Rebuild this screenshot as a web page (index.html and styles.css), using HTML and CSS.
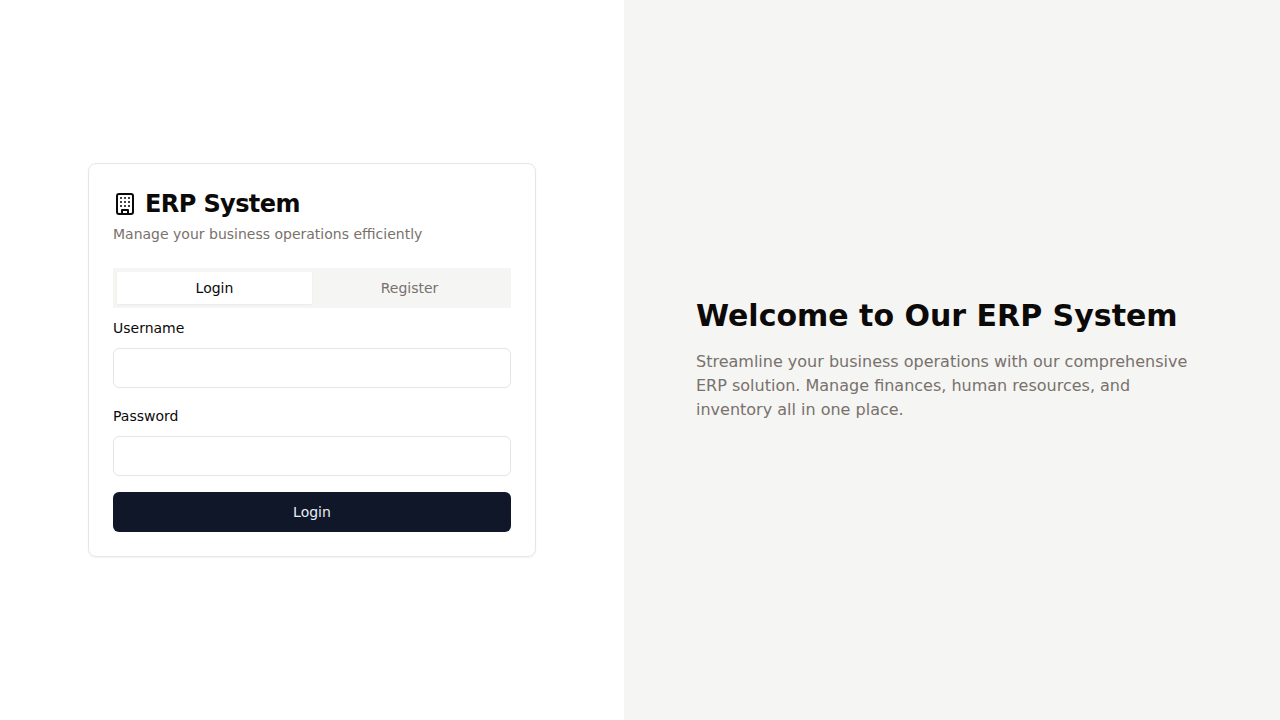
FILE: index.html
```html
<!DOCTYPE html>
<html lang="en">
<head>
<meta charset="utf-8">
<meta name="viewport" content="width=device-width, initial-scale=1">
<title>ERP System</title>
<link rel="stylesheet" href="styles.css">
</head>
<body>
<div class="page">
  <main class="auth">
    <section class="card">
      <header class="card-header">
        <h1 class="card-title">
          <svg class="icon" viewBox="0 0 24 24" aria-hidden="true">
            <rect x="4" y="2" width="16" height="20" rx="2"/>
            <path d="M9 22v-4h6v4M8 6h.01M16 6h.01M12 6h.01M12 10h.01M12 14h.01M16 10h.01M16 14h.01M8 10h.01M8 14h.01"/>
          </svg>
          ERP System
        </h1>
        <p class="card-description">Manage your business operations efficiently</p>
      </header>
      <div class="tabs" role="tablist">
        <button class="tab tab-active" type="button" role="tab" aria-selected="true">Login</button>
        <button class="tab" type="button" role="tab" aria-selected="false">Register</button>
      </div>
      <form class="form">
        <div class="field">
          <label class="label" for="username">Username</label>
          <input class="input" id="username" name="username" type="text">
        </div>
        <div class="field">
          <label class="label" for="password">Password</label>
          <input class="input" id="password" name="password" type="password">
        </div>
        <button class="submit" type="submit">Login</button>
      </form>
    </section>
  </main>
  <aside class="hero">
    <div class="hero-content">
      <h2 class="hero-title">Welcome to Our ERP System</h2>
      <p class="hero-text">Streamline your business operations with our comprehensive ERP solution. Manage finances, human resources, and inventory all in one place.</p>
    </div>
  </aside>
</div>
</body>
</html>
```
FILE: styles.css
```css
* {
  box-sizing: border-box;
  margin: 0;
}

body {
  background: #fff;
  color: #0c0a09;
  font-family: "DejaVu Sans", sans-serif;
  font-size: 16px;
  line-height: 24px;
}

button,
input {
  font: inherit;
}

.page {
  display: flex;
  min-height: 100vh;
}

.auth,
.hero {
  display: flex;
  align-items: center;
  justify-content: center;
}

.auth {
  flex: 1 1 512px;
  padding: 32px;
}

.hero {
  flex: 1 1 544px;
  padding: 16px;
  background: #f5f5f3;
}

.card {
  width: 100%;
  max-width: 448px;
  padding: 24px;
  border: 1px solid #e5e5e5;
  border-radius: 8px;
  box-shadow: 0 1px 2px rgba(0, 0, 0, 0.05);
}

.card-header {
  display: flex;
  flex-direction: column;
  gap: 4px;
  margin-bottom: 24px;
}

.card-title {
  display: flex;
  align-items: center;
  gap: 8px;
  font-size: 24px;
  line-height: 32px;
  letter-spacing: -0.025em;
}

.icon {
  width: 24px;
  height: 24px;
  fill: none;
  stroke: currentColor;
  stroke-width: 2;
  stroke-linecap: round;
  stroke-linejoin: round;
}

.card-description {
  color: #78716c;
  font-size: 14px;
  line-height: 20px;
}

.tabs {
  display: grid;
  grid-template-columns: 1fr 1fr;
  height: 40px;
  margin-bottom: 8px;
  padding: 4px;
  background: #f5f5f4;
}

.tab {
  border: 0;
  background: none;
  color: #78716c;
  font-size: 14px;
  line-height: 20px;
}

.tab-active {
  background: #fff;
  color: #0c0a09;
  box-shadow: 0 1px 2px rgba(0, 0, 0, 0.05);
}

.form {
  display: flex;
  flex-direction: column;
  gap: 16px;
}

.field {
  display: flex;
  flex-direction: column;
  gap: 8px;
}

.label {
  font-size: 14px;
}

.input {
  width: 100%;
  height: 40px;
  padding: 8px 12px;
  border: 1px solid #e5e5e5;
  border-radius: 6px;
  background: #fff;
  font-size: 14px;
}

.submit {
  height: 40px;
  border: 0;
  border-radius: 6px;
  background: #0f1729;
  color: #e9edf5;
  font-size: 14px;
}

.hero-content {
  width: 100%;
  max-width: 512px;
}

.hero-title {
  margin-bottom: 16px;
  font-size: 30px;
  line-height: 36px;
}

.hero-text {
  color: #78716c;
}
```
